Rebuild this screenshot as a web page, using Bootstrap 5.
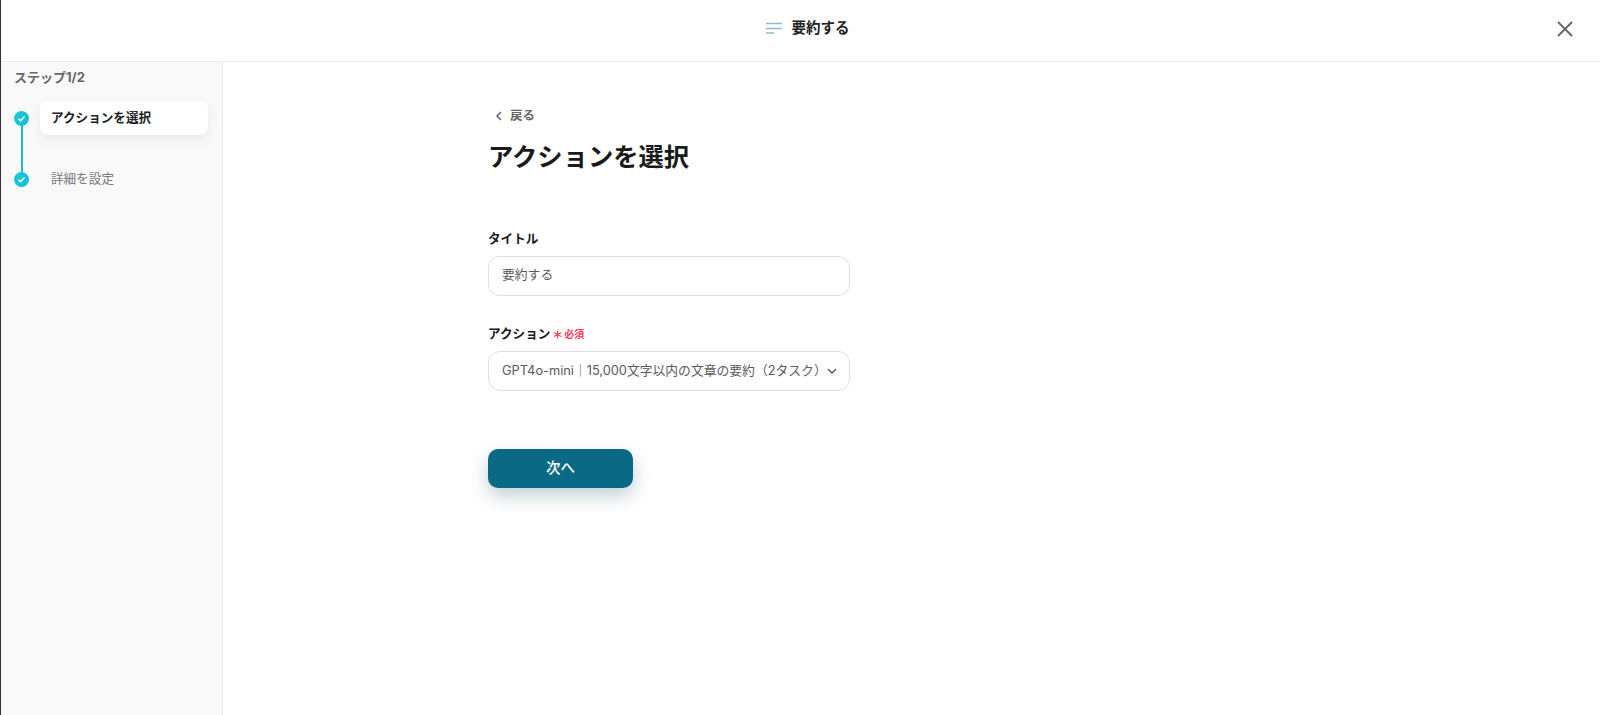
<!DOCTYPE html>
<html lang="ja">
<head>
<meta charset="utf-8">
<title>要約する</title>
<link href="https://cdn.jsdelivr.net/npm/bootstrap@5.3.0/dist/css/bootstrap.min.css" rel="stylesheet">
<style>
html,body{height:100%;}
body{font-family:"Inter","Noto Sans CJK JP",sans-serif;color:#1a1a1a;background:#fff;overflow:hidden;}
.shell{height:715px;border-left:1px solid #333;}
.topbar{height:62px;border-bottom:1px solid #ececec;padding-left:13px;}
.topbar-title{font-size:14.5px;font-weight:700;color:#222;gap:9px;margin-top:-6px;}
.close-x{right:15px;top:1px;width:40px;height:56px;background:none;border:0;padding:0;}
.stage{height:653px;}
.side{width:222px;background:#f9f9f9;border-right:1px solid #e8e8e8;padding:7px 14px 0 13px;flex:none;}
.step-head{font-size:13px;font-weight:700;color:#666;line-height:16px;margin-bottom:16px;}
.step-row{height:34px;gap:11px;}
.step-rail{width:15px;flex:none;}
.step-dot{width:15px;height:15px;border-radius:50%;background:linear-gradient(135deg,#20c9d6,#12bcd6);}
.step-link{width:2px;height:47px;background:#1bbcc8;margin:-10px 0 -10px 6.5px;}
.step-pill{font-size:12.6px;line-height:34px;height:34px;width:168px;padding-left:11px;border-radius:8px;background:#fff;font-weight:700;color:#222;box-shadow:0 4px 12px rgba(0,0,0,.07);}
.step-plain{font-size:12.6px;line-height:34px;padding-left:11px;color:#777;}
.main-pane{padding:41px 0 0 265px;}
.form-col{width:362px;}
.back-link{font-size:12.5px;font-weight:700;color:#666;text-decoration:none;gap:8px;line-height:16px;padding-left:7px;}
.page-head{font-size:25.3px;font-weight:700;line-height:36px;color:#1a1a1a;margin:12px 0 56px;}
.field-label{font-size:12.6px;font-weight:700;color:#1a1a1a;line-height:16px;margin-bottom:9px;}
.req-mark{font-size:10px;color:#f5405a;font-weight:700;margin-left:3px;}
.req-star{width:9px;height:9px;margin-right:2px;}
.field-box{height:40px;border:1px solid #dcdfe6;border-radius:12px;font-size:12.8px;color:#5a5a5a;padding:0 13px;box-shadow:none;background:#fff;}
.field-box:focus{border-color:#dcdfe6;box-shadow:none;color:#5a5a5a;}
.title-input{padding-bottom:5px;}
.field-gap{margin-bottom:30px;}
.select-text{white-space:nowrap;overflow:hidden;}
.chevron-mark{margin-right:-1px;}
.next-btn{width:145px;height:39px;margin-top:58px;background:#0a6a85;border:0;border-radius:10px;color:#fff;font-size:14.5px;font-weight:500;box-shadow:0 8px 18px rgba(10,70,90,.25);padding:0 0 2px;}
.next-btn:hover{background:#0a6a85;color:#fff;}
</style>
</head>
<body>
<div class="shell d-flex flex-column">
  <header class="topbar d-flex align-items-center justify-content-center position-relative flex-none">
    <div class="topbar-title d-flex align-items-center">
      <svg width="18" height="12" viewBox="0 0 18 12" aria-hidden="true"><path d="M1 1.5h16M1 6.5h16M1 11h8" stroke="#8fbccb" stroke-width="1.5" fill="none"/></svg>
      <span>要約する</span>
    </div>
    <button class="close-x position-absolute d-flex align-items-center justify-content-center" aria-label="閉じる" type="button">
      <svg width="18" height="18" viewBox="0 0 18 18" aria-hidden="true"><path d="M2 2l14 14M16 2L2 16" stroke="#666" stroke-width="1.8" fill="none"/></svg>
    </button>
  </header>
  <div class="stage d-flex">
    <aside class="side">
      <div class="step-head">ステップ1/2</div>
      <div class="step-row d-flex align-items-center">
        <div class="step-rail"><div class="step-dot d-flex align-items-center justify-content-center"><svg width="9" height="9" viewBox="0 0 9 9" aria-hidden="true"><path d="M1.5 4.8l2 2 4-4.3" stroke="#fff" stroke-width="1.4" fill="none"/></svg></div></div>
        <div class="step-pill">アクションを選択</div>
      </div>
      <div class="step-link"></div>
      <div class="step-row d-flex align-items-center">
        <div class="step-rail"><div class="step-dot d-flex align-items-center justify-content-center"><svg width="9" height="9" viewBox="0 0 9 9" aria-hidden="true"><path d="M1.5 4.8l2 2 4-4.3" stroke="#fff" stroke-width="1.4" fill="none"/></svg></div></div>
        <div class="step-plain">詳細を設定</div>
      </div>
    </aside>
    <main class="main-pane flex-grow-1">
      <div class="form-col">
        <a class="back-link d-inline-flex align-items-center" href="#">
          <svg width="7" height="10" viewBox="0 0 7 10" aria-hidden="true"><path d="M6 1L2 5l4 4" stroke="#666" stroke-width="1.5" fill="none"/></svg>
          <span>戻る</span>
        </a>
        <h1 class="page-head">アクションを選択</h1>
        <div class="field-gap">
          <div class="field-label">タイトル</div>
          <input class="form-control field-box title-input" type="text" value="要約する">
        </div>
        <div>
          <div class="field-label d-flex align-items-center">アクション<span class="req-mark d-inline-flex align-items-center"><svg class="req-star" viewBox="0 0 10 10" aria-hidden="true"><path d="M5 .5v9M1 2.7l8 4.6M9 2.7L1 7.3" stroke="#f5405a" stroke-width="1.4" fill="none"/></svg>必須</span></div>
          <div class="field-box d-flex align-items-center justify-content-between">
            <span class="select-text">GPT4o-mini｜15,000文字以内の文章の要約（2タスク）</span>
            <svg class="flex-shrink-0 chevron-mark" width="10" height="6" viewBox="0 0 10 6" aria-hidden="true"><path d="M1 1l4 4 4-4" stroke="#555" stroke-width="1.3" fill="none"/></svg>
          </div>
        </div>
        <button class="btn next-btn d-block" type="button">次へ</button>
      </div>
    </main>
  </div>
</div>
<script src="https://cdn.jsdelivr.net/npm/bootstrap@5.3.0/dist/js/bootstrap.bundle.min.js"></script>
</body>
</html>
